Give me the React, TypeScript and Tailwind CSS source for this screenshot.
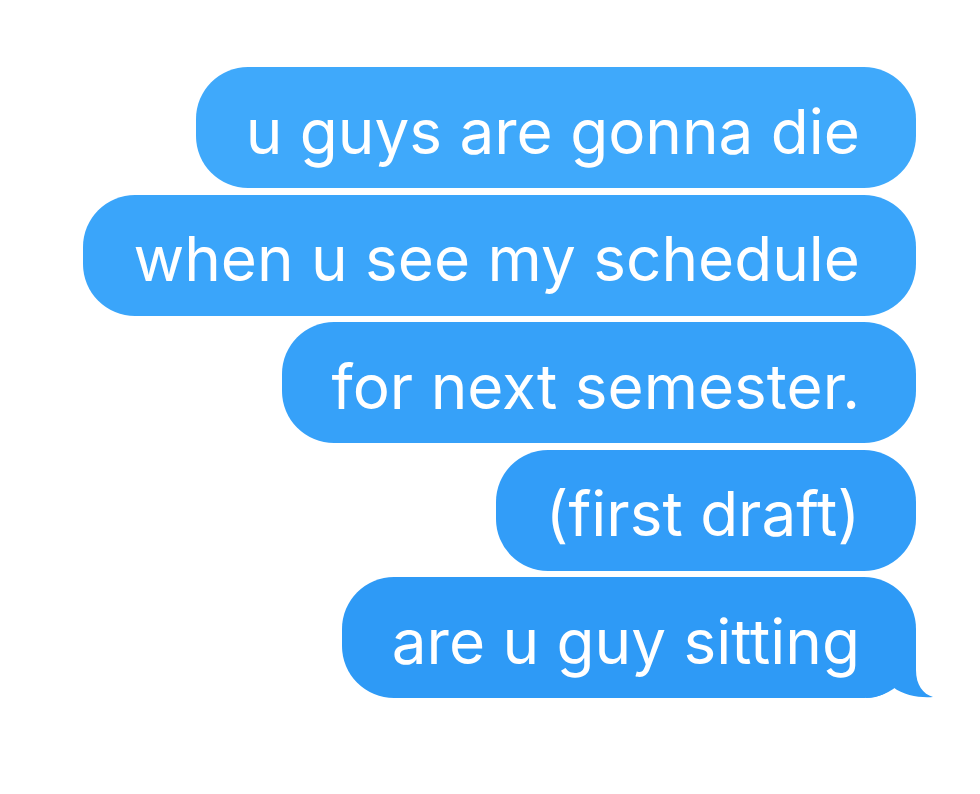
import React from 'react';

type Bubble = { text: string; color: string; tail?: boolean };

const bubbles: Bubble[] = [
    { text: 'u guys are gonna die', color: 'bg-[#3fa9fb]' },
    { text: 'when u see my schedule', color: 'bg-[#3aa5fa]' },
    { text: 'for next semester.', color: 'bg-[#36a1f9]' },
    { text: '(first draft)', color: 'bg-[#329df8]' },
    { text: 'are u guy sitting', color: 'bg-[#2e9af6]', tail: true },
];

// little hook at the bottom right of the last bubble
const Tail: React.FC = () => (
    <svg className="absolute right-[-20px] bottom-[-2px]" width="70" height="60" viewBox="0 0 70 60">
        <path
            d="M50 0 L50 30 C50 45 57 54 67 57 C55 58 38 56 27 47 C22 52 14 58 0 58 L0 0 Z"
            fill="#2e9af6"
        />
    </svg>
);

const App: React.FC = () => {
    return (
        <div className="w-[980px] h-[794px] bg-white overflow-hidden" style={{ fontFamily: 'Inter, "Noto Sans", sans-serif' }}>
            <div className="flex flex-col items-end gap-[6.5px] pt-[67px] pr-[64px]">
                {bubbles.map((b, i) => (
                    <div
                        key={i}
                        className={`relative h-[121px] flex items-center rounded-[52px] pl-[50px] pr-[56px] pt-[8px] ${b.color}`}
                    >
                        <span className="relative z-10 text-white text-[62px] leading-none whitespace-nowrap">{b.text}</span>
                        {b.tail && <Tail />}
                    </div>
                ))}
            </div>
        </div>
    );
};

export default App;
